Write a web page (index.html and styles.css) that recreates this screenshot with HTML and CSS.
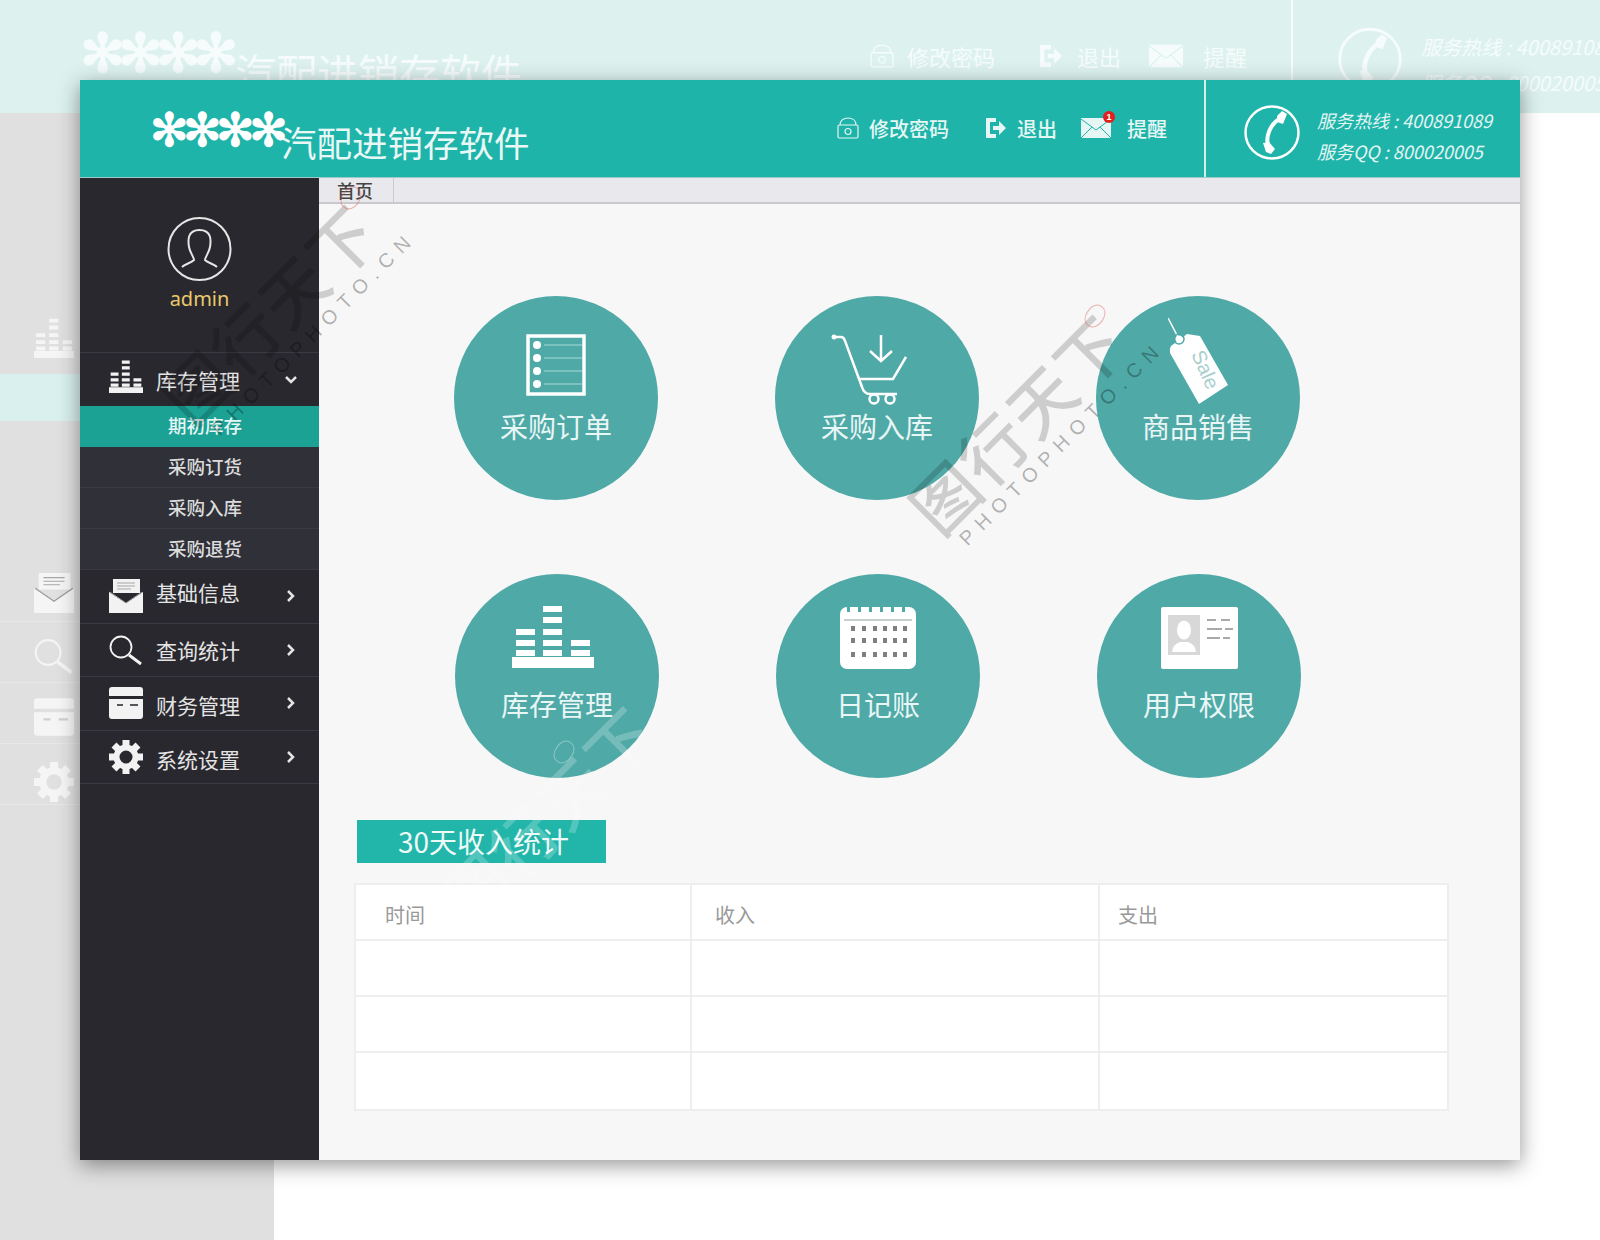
FILE: index.html
```html
<!DOCTYPE html>
<html lang="zh-CN">
<head>
<meta charset="utf-8">
<title>汽配进销存软件</title>
<link rel="stylesheet" href="styles.css">
</head>
<body>
<svg class="defs" width="0" height="0" aria-hidden="true">
  <symbol id="i-bars" viewBox="0 0 82 63" preserveAspectRatio="none">
    <path fill="currentColor" d="M0 52h82v11H0zM4 45h19v6H4zM4 35h19v6H4zM4 24h19v6H4zM31 45h19v6H31zM31 35h19v6H31zM31 24h19v6H31zM31 12h19v6H31zM31 1h19v6H31zM59 45h19v6H59zM59 35h19v6H59z"/>
  </symbol>
  <symbol id="i-lock" viewBox="0 0 22 22">
    <g fill="none" stroke="currentColor" stroke-width="1.2"><rect x="1" y="8" width="20" height="13" rx="1.5"/><path d="M3 8C3 3 7 1 11 1s8 2 8 7"/><circle cx="11" cy="14.5" r="3"/></g>
  </symbol>
  <symbol id="i-logout" viewBox="0 0 22 22">
    <path fill="currentColor" d="M1 1h10v4H5v12h6v4H1z"/><path fill="currentColor" d="M8 9h6V4l7 7-7 7v-5H8z"/>
  </symbol>
  <symbol id="i-mail" viewBox="0 0 30 20">
    <rect width="30" height="20" fill="currentColor"/><path class="mail-line" d="M0 1l15 11L30 1M0 20l11-11M30 20L19 9" fill="none" stroke-width="1"/>
  </symbol>
  <symbol id="i-phone" viewBox="0 0 56 55">
    <ellipse cx="28" cy="27.500" rx="26.500" ry="26" fill="none" stroke="currentColor" stroke-width="2.500"/>
    <path d="M37 13C27 18 20 32 25 43" fill="none" stroke="currentColor" stroke-width="4"/>
    <path fill="currentColor" d="M33 11l5-5 5 3-4 10-6-2zM19 38l6-1 6 7-4 5-5-2z"/>
  </symbol>
  <symbol id="i-list" viewBox="0 0 60 62">
    <rect x="2" y="2" width="56" height="58" fill="none" stroke="currentColor" stroke-width="3.500"/>
    <g fill="currentColor"><circle cx="11" cy="11" r="4"/><circle cx="11" cy="24" r="4"/><circle cx="11" cy="37" r="4"/><circle cx="11" cy="50" r="4"/></g>
    <path d="M18 11h38M18 24h38M18 37h38M18 50h38" stroke="#a8dbd6" stroke-width="1"/>
  </symbol>
  <symbol id="i-cart" viewBox="0 0 76 72">
    <g fill="none" stroke="currentColor" stroke-width="2.500">
      <path d="M2 4h8q3 0 4 4l17 46q2 7 8 7h27M29 46h33l13-22"/>
      <circle cx="43" cy="66" r="4.500"/><circle cx="59" cy="66" r="4.500"/>
      <path d="M50 2v26M39 18l11 10 11-10"/>
    </g>
    <circle cx="3" cy="4" r="2.500" fill="currentColor"/>
  </symbol>
  <symbol id="i-tag" viewBox="0 0 60 87">
    <path d="M0 0l11 21" stroke="currentColor" stroke-width="1.500"/>
    <path fill="currentColor" d="M19 16l13 2 28 49-29 19L2 35q-1-4 1-7z"/>
    <circle cx="11" cy="21" r="3.500" fill="currentColor"/><circle cx="11" cy="21" r="5" fill="none" stroke="#4fa9a7" stroke-width="1.500"/>
    <text class="tag-text" x="0" y="0" transform="translate(23 36) rotate(66)">Sale</text>
  </symbol>
  <symbol id="i-cal" viewBox="0 0 76 62">
    <rect width="76" height="62" rx="7" fill="currentColor"/>
    <path fill="#4fa9a7" d="M7 0h3v5H7zM18 0h3v5h-3zM29 0h3v5h-3zM40 0h3v5h-3zM51 0h3v5h-3zM62 0h3v5h-3z"/>
    <path fill="#c9cfcf" d="M4 12h68v2H4z"/>
    <path fill="#7f7f7f" d="M11 19h4v5h-4zM22 19h4v5h-4zM33 19h4v5h-4zM43 19h4v5h-4zM53 19h4v5h-4zM63 19h4v5h-4zM11 31h4v5h-4zM22 31h4v5h-4zM33 31h4v5h-4zM43 31h4v5h-4zM53 31h4v5h-4zM63 31h4v5h-4zM11 45h4v5h-4zM22 45h4v5h-4zM33 45h4v5h-4zM43 45h4v5h-4zM53 45h4v5h-4zM63 45h4v5h-4z"/>
  </symbol>
  <symbol id="i-id" viewBox="0 0 77 62">
    <rect width="77" height="62" rx="2" fill="currentColor"/>
    <rect x="7" y="8" width="32" height="40" fill="#d8d8d8"/>
    <ellipse cx="23" cy="23" rx="7" ry="9.500" fill="#fff"/><path fill="#fff" d="M11 45q1-8 8-10h8q7 2 8 10z"/>
    <path stroke="#a9a9a9" stroke-width="1.800" d="M46 13h9M60 13h9M46 22h15M64 22h8M46 31h13M62 31h7"/>
  </symbol>
  <symbol id="i-envelope" viewBox="0 0 34 34">
    <path fill="currentColor" d="M4 0h27v14H4zM0 13l17 11 17-11v21H0z"/>
    <path d="M8 4h18M8 7h18M8 10h14" stroke="#a6a6a6" stroke-width="1"/>
    <path d="M1 13l16 11 16-11" fill="none" stroke="#9a9a9a" stroke-width="1"/>
  </symbol>
  <symbol id="i-search" viewBox="0 0 34 30">
    <g fill="none" stroke="currentColor"><circle cx="12" cy="12" r="10.500" stroke-width="1.800"/><path d="M20 20l12 9" stroke-width="3"/></g>
  </symbol>
  <symbol id="i-card" viewBox="0 0 34 32">
    <path fill="currentColor" d="M3 0h28q3 0 3 3v6H0V3q0-3 3-3zM0 12h34v17q0 3-3 3H3q-3 0-3-3z"/>
    <path class="card-line" d="M8 18h6M21 18h8" stroke-width="2"/>
  </symbol>
  <symbol id="i-gear" viewBox="0 0 34 34">
    <g stroke="currentColor" stroke-width="7"><path d="M17 0v8M17 26v8M0 17h8M26 17h8M5 5l6 6M23 23l6 6M29 5l-6 6M5 29l6-6"/></g>
    <circle cx="17" cy="17" r="9.500" fill="none" stroke="currentColor" stroke-width="6"/>
  </symbol>
</svg>

<div class="desktop">
  <div class="ghost">
    <div class="ghost-band">
      <div class="ghost-title"><span class="ghost-stars">✻✻✻✻</span><span class="ghost-name">汽配进销存软件</span></div>
      <div class="ghost-tools">
        <svg class="ghost-ico"><use href="#i-lock"/></svg><span class="ghost-tool-label">修改密码</span>
        <svg class="ghost-ico ghost-ico-out"><use href="#i-logout"/></svg><span class="ghost-tool-label">退出</span>
        <svg class="ghost-ico ghost-ico-mail"><use href="#i-mail"/></svg><span class="ghost-tool-label">提醒</span>
      </div>
      <div class="ghost-sep"></div>
      <svg class="ghost-phone"><use href="#i-phone"/></svg>
      <div class="ghost-hot"><div>服务热线 : 400891089</div><div class="ghost-qq">服务QQ : 800020005</div></div>
    </div>
    <div class="ghost-lower">
      <div class="ghost-rail">
        <div class="ghost-row ghost-row-bars"><svg class="ghost-rail-ico"><use href="#i-bars"/></svg></div>
        <div class="ghost-active"></div>
        <div class="ghost-row ghost-row-mail"><svg class="ghost-rail-ico"><use href="#i-envelope"/></svg></div>
        <div class="ghost-row"><svg class="ghost-rail-ico"><use href="#i-search"/></svg></div>
        <div class="ghost-row"><svg class="ghost-rail-ico"><use href="#i-card"/></svg></div>
        <div class="ghost-row"><svg class="ghost-rail-ico gear-ghost"><use href="#i-gear"/></svg></div>
      </div>
    </div>
  </div>

  <div class="window">
    <header class="top">
      <div class="brand"><span class="stars">✻✻✻✻</span><span class="brand-name">汽配进销存软件</span></div>
      <nav class="tools">
        <a class="tool tool-pass"><svg class="ico-lock"><use href="#i-lock"/></svg>修改密码</a>
        <a class="tool tool-out"><svg class="ico-out"><use href="#i-logout"/></svg>退出</a>
        <a class="tool tool-mail"><span class="mail-wrap"><svg class="ico-mail"><use href="#i-mail"/></svg><span class="badge">1</span></span>提醒</a>
      </nav>
      <div class="hotline">
        <svg class="ico-phone"><use href="#i-phone"/></svg>
        <div class="hot-text"><div>服务热线 : 400891089</div><div>服务QQ : 800020005</div></div>
      </div>
    </header>

    <div class="body">
      <aside class="side">
        <div class="profile">
          <svg class="avatar" viewBox="0 0 65 64"><circle cx="32.500" cy="32" r="31" fill="none" stroke="#e6e6e6" stroke-width="2"/><path d="M15 50C18 47 24 46 27 43 27 40 23 36 22 30 21 24 20 13 32.500 13 45 13 44 24 43 30 42 36 38 40 38 43 41 46 47 47 50 50" fill="none" stroke="#e6e6e6" stroke-width="2"/></svg>
          <div class="admin">admin</div>
        </div>
        <div class="menu-row menu-open"><svg class="menu-ico bars"><use href="#i-bars"/></svg><span class="menu-text">库存管理</span><svg class="chev" viewBox="0 0 14 14"><path d="M2 4l5 5 5-5"/></svg></div>
        <div class="sub sub-active">期初库存</div>
        <div class="sub">采购订货</div>
        <div class="sub">采购入库</div>
        <div class="sub">采购退货</div>
        <div class="menu-row"><svg class="menu-ico"><use href="#i-envelope"/></svg><span class="menu-text text-up">基础信息</span><svg class="chev" viewBox="0 0 14 14"><path d="M4 2l5 5-5 5"/></svg></div>
        <div class="menu-row"><svg class="menu-ico"><use href="#i-search"/></svg><span class="menu-text">查询统计</span><svg class="chev" viewBox="0 0 14 14"><path d="M4 2l5 5-5 5"/></svg></div>
        <div class="menu-row"><svg class="menu-ico"><use href="#i-card"/></svg><span class="menu-text text-down">财务管理</span><svg class="chev" viewBox="0 0 14 14"><path d="M4 2l5 5-5 5"/></svg></div>
        <div class="menu-row"><svg class="menu-ico"><use href="#i-gear"/></svg><span class="menu-text text-down">系统设置</span><svg class="chev" viewBox="0 0 14 14"><path d="M4 2l5 5-5 5"/></svg></div>
      </aside>

      <main class="main">
        <div class="tabs"><div class="tab">首页</div></div>
        <div class="content">
          <div class="circles">
            <a class="circle"><svg class="c-ico ic-list"><use href="#i-list"/></svg><span class="c-label">采购订单</span></a>
            <a class="circle"><svg class="c-ico ic-cart"><use href="#i-cart"/></svg><span class="c-label">采购入库</span></a>
            <a class="circle"><svg class="c-ico ic-tag"><use href="#i-tag"/></svg><span class="c-label">商品销售</span></a>
          </div>
          <div class="circles circles-second">
            <a class="circle"><svg class="c-ico ic-bars"><use href="#i-bars"/></svg><span class="c-label">库存管理</span></a>
            <a class="circle"><svg class="c-ico ic-cal"><use href="#i-cal"/></svg><span class="c-label">日记账</span></a>
            <a class="circle"><svg class="c-ico ic-id"><use href="#i-id"/></svg><span class="c-label">用户权限</span></a>
          </div>
          <h2 class="stat-title">30天收入统计</h2>
          <table class="stat">
            <thead><tr><th class="col-time">时间</th><th class="col-in">收入</th><th class="col-out">支出</th></tr></thead>
            <tbody>
              <tr><td></td><td></td><td></td></tr>
              <tr><td></td><td></td><td></td></tr>
              <tr class="row-last"><td></td><td></td><td></td></tr>
            </tbody>
          </table>
        </div>
      </main>
    </div>

    <div class="mark mark-left"><div class="mark-cn">图行天下</div><div class="mark-en">PHOTOPHOTO.CN</div></div>
    <div class="mark mark-mid"><div class="mark-cn">图行天下</div><div class="mark-en">PHOTOPHOTO.CN</div></div>
    <div class="mark mark-low"><div class="mark-cn">图行天下</div></div>
    <span class="seal seal-left"></span>
    <span class="seal seal-mid"></span>
    <span class="seal seal-low"></span>
  </div>
</div>
</body>
</html>
```

FILE: styles.css
```css
* { box-sizing: border-box; }
html, body { margin: 0; padding: 0; }
body {
  width: 1600px;
  height: 1240px;
  overflow: hidden;
  background: #fff;
  font-family: "Noto Sans CJK SC", "Noto Sans", sans-serif;
}
.defs { position: absolute; }
.desktop { position: relative; width: 1600px; height: 1240px; overflow: hidden; }
.mail-line { stroke: var(--mail-line, #1fb4a9); }
.card-line { stroke: var(--card-line, #55555c); }

/* blurred desktop behind the window */
.ghost { position: absolute; inset: 0; color: #f6fcfb; }
.ghost-band {
  height: 113px;
  background: #ddf2ef;
  display: flex;
  overflow: hidden;
  padding-left: 80px;
  --mail-line: #ddf2ef;
}
.ghost-title { display: flex; width: 789px; flex: none; padding-top: 24px; align-items: flex-start; }
.ghost-stars { font: 54px/60px "DejaVu Sans", sans-serif; letter-spacing: -7.500px; width: 155px; flex: none; white-space: nowrap; -webkit-text-stroke: 1.500px #f6fcfb; }
.ghost-name { font-size: 41px; line-height: 58px; margin-top: 18px; white-space: nowrap; }
.ghost-tools { display: flex; align-items: center; height: 68px; padding-top: 44px; width: 422px; flex: none; }
.ghost-ico { width: 26px; height: 24px; margin-right: 12px; }
.ghost-ico-out { margin-left: 44px; margin-right: 14px; width: 24px; }
.ghost-ico-mail { margin-left: 28px; margin-right: 20px; width: 34px; }
.ghost-tool-label { font-size: 22px; white-space: nowrap; }
.ghost-sep { width: 2px; height: 80px; background: #f6fcfb; flex: none; }
.ghost-phone { width: 64px; height: 64px; margin: 27px 0 0 45px; flex: none; }
.ghost-hot { margin-left: 19px; padding-top: 32px; font-size: 20px; font-style: italic; white-space: nowrap; line-height: 30px; }
.ghost-qq { margin-top: 6px; }
.ghost-lower { height: 1127px; }
.ghost-rail {
  width: 274px;
  height: 100%;
  background: #e0e0e0;
  padding-top: 200px;
  display: flex;
  flex-direction: column;
  color: #f5f5f5;
  --card-line: #cfcfcf;
}
.ghost-row {
  height: 61px;
  padding: 14px 0 0 34px;
  border-bottom: 1px solid #e7e7e7;
  flex: none;
}
.ghost-row-bars { height: 61px; padding-top: 5px; border-bottom: 0; }
.ghost-active { height: 47px; background: #d9f0ee; flex: none; margin-bottom: 146px; }
.ghost-row-mail { height: 55px; padding-top: 6px; }
.ghost-rail-ico { width: 40px; height: 40px; display: block; }
.gear-ghost { margin-top: 4px; }

/* main window */
.window {
  position: absolute;
  left: 80px;
  top: 80px;
  width: 1440px;
  height: 1080px;
  display: flex;
  flex-direction: column;
  background: #f7f7f7;
  box-shadow: 0 5px 20px rgba(0, 0, 0, .42);
  overflow: hidden;
  isolation: isolate;
}
.top {
  height: 98px;
  flex: none;
  background: #1fb4a9;
  display: flex;
  color: #fff;
  padding-left: 70px;
  border-bottom: 1px solid #9ccac8;
}
.brand { width: 687px; flex: none; display: flex; align-items: flex-start; padding-top: 23px; }
.stars { font: 46px/54px "DejaVu Sans", sans-serif; letter-spacing: -5.500px; width: 131px; flex: none; white-space: nowrap; -webkit-text-stroke: 1.200px #fff; }
.brand-name { font-size: 35.500px; line-height: 50px; margin-top: 14px; white-space: nowrap; color: #e9f8f6; }
.tools { display: flex; align-items: flex-start; padding-top: 34px; width: 367px; flex: none; font-size: 20px; font-weight: 500; color: #e6f6f4; }
.tool { display: flex; align-items: center; height: 28px; white-space: nowrap; }
.tool-pass { width: 148px; }
.tool-out { width: 96px; }
.ico-lock { width: 22px; height: 22px; margin-right: 10px; }
.ico-out { width: 22px; height: 22px; margin-right: 10px; }
.mail-wrap { position: relative; width: 30px; height: 20px; margin-right: 16px; display: block; }
.ico-mail { width: 30px; height: 20px; display: block; }
.badge {
  position: absolute;
  left: 22px;
  top: -7px;
  width: 12px;
  height: 12px;
  border-radius: 50%;
  background: #e0201c;
  color: #fff;
  font: 700 9px/12px "Liberation Sans", sans-serif;
  text-align: center;
}
.hotline { flex: 1; border-left: 2px solid #d2efec; display: flex; align-items: flex-start; padding: 25px 0 0 38px; }
.ico-phone { width: 56px; height: 55px; flex: none; }
.hot-text { margin-left: 17px; font-size: 18px; font-style: italic; line-height: 31px; color: #e3f5f3; white-space: nowrap; }

.body { flex: 1; display: flex; min-height: 0; }
.side { width: 239px; flex: none; background: #29282e; color: #e4e4e4; }
.profile { height: 175px; padding-top: 39px; display: flex; flex-direction: column; align-items: center; border-bottom: 1px solid #3a3a44; }
.avatar { width: 65px; height: 64px; display: block; }
.admin { font: 20px/26px "Noto Sans", sans-serif; color: #e9c96b; margin-top: 5px; }
.menu-row {
  height: 53.500px;
  display: flex;
  align-items: center;
  padding-left: 29px;
  border-bottom: 1px solid #3a3a44;
}
.menu-open { height: 53px; border-bottom: 0; }
.menu-ico { width: 34px; height: 34px; color: #f2f2f2; flex: none; }
.menu-ico.bars { height: 33px; margin-bottom: 6px; }
.menu-text { margin-left: 13px; font-size: 21px; width: 115px; white-space: nowrap; }
.text-up { padding-bottom: 8px; }
.text-down { padding-top: 4px; }
.chev { width: 14px; height: 14px; fill: none; stroke: #e4e4e4; stroke-width: 2.500; flex: none; margin-left: 13px; }
.sub {
  height: 41px;
  line-height: 38px;
  background: #2f3038;
  padding-left: 88px;
  font-size: 18.500px;
  font-weight: 500;
  color: #dcdcdc;
  border-bottom: 1px solid #3a3a44;
}
.sub-active { background: #1ba295; color: #e6f6f4; border-bottom: 0; }

.main { flex: 1; display: flex; flex-direction: column; min-width: 0; }
.tabs { height: 26px; flex: none; background: #e9e9ed; border-bottom: 2px solid #c9c9ce; display: flex; }
.tab { width: 75px; border-right: 1px solid #c9c9ce; padding-left: 18px; font-size: 18px; line-height: 24px; font-weight: 500; color: #444; }
.content { flex: 1; padding: 92px 0 0 35px; }
.circles { display: flex; gap: 117px; padding-left: 100px; }
.circles-second { padding-left: 101px; margin-top: 74px; }
.circle {
  position: relative;
  width: 204px;
  height: 204px;
  border-radius: 50%;
  background: #4fa9a7;
  color: #fff;
  flex: none;
  display: block;
}
.c-ico { position: absolute; display: block; }
.ic-list { left: 72px; top: 38px; width: 60px; height: 62px; }
.ic-cart { left: 56px; top: 37px; width: 76px; height: 72px; }
.ic-tag { left: 72px; top: 22px; width: 60px; height: 87px; }
.ic-bars { left: 57px; top: 31px; width: 82px; height: 63px; }
.ic-cal { left: 64px; top: 33px; width: 76px; height: 62px; }
.ic-id { left: 64px; top: 33px; width: 77px; height: 62px; }
.c-label {
  position: absolute;
  left: 0;
  right: 0;
  top: 108px;
  text-align: center;
  font-size: 28px;
  line-height: 44px;
  color: #e8f6f5;
}
.tag-text { font: 20px "Liberation Sans", sans-serif; fill: #a9cfce; }

.stat-title {
  margin: 42px 0 20px 3px;
  width: 249px;
  height: 43px;
  background: #22b5a9;
  color: #eefaf8;
  font-size: 28px;
  font-weight: 400;
  line-height: 43px;
  padding-left: 41px;
  white-space: nowrap;
}
.stat {
  width: 1095px;
  table-layout: fixed;
  border-collapse: collapse;
  background: #fff;
  border: 2px solid #eeeeee;
}
.stat th, .stat td { height: 56px; border: 2px solid #eeeeee; padding: 0; }
.stat th { font-size: 20px; font-weight: 400; color: #999; text-align: left; padding-top: 4px; }
.stat .row-last td { height: 58px; }
.col-time { width: 336px; padding-left: 29px !important; }
.col-in { width: 408px; padding-left: 23px !important; }
.col-out { padding-left: 18px !important; }

/* photo-library watermark overlaid on the picture */
.mark { position: absolute; transform-origin: left center; pointer-events: none; white-space: nowrap; }
.mark-cn { font-size: 66px; line-height: 70px; font-weight: 500; letter-spacing: 2px; color: rgba(0, 0, 0, .17); }
.mark-en { font: 20px/24px "Liberation Sans", sans-serif; letter-spacing: 8px; color: rgba(0, 0, 0, .3); margin: 0 0 0 14px; }
.mark-left { left: 100px; top: 290px; transform: rotate(-45deg); }
.mark-mid { left: 848px; top: 400px; transform: rotate(-45deg); }
.mark-low { left: 370px; top: 795px; transform: rotate(-45deg); }
.mark-low .mark-cn { color: rgba(255, 255, 255, .22); }
.seal { position: absolute; width: 18px; height: 24px; border: 1.500px solid rgba(220, 90, 80, .45); border-radius: 45%; transform: rotate(35deg); }
.seal-left { left: 262px; top: 106px; }
.seal-mid { left: 1006px; top: 224px; }
.seal-low { left: 475px; top: 660px; border-color: rgba(255, 255, 255, .35); }
```
